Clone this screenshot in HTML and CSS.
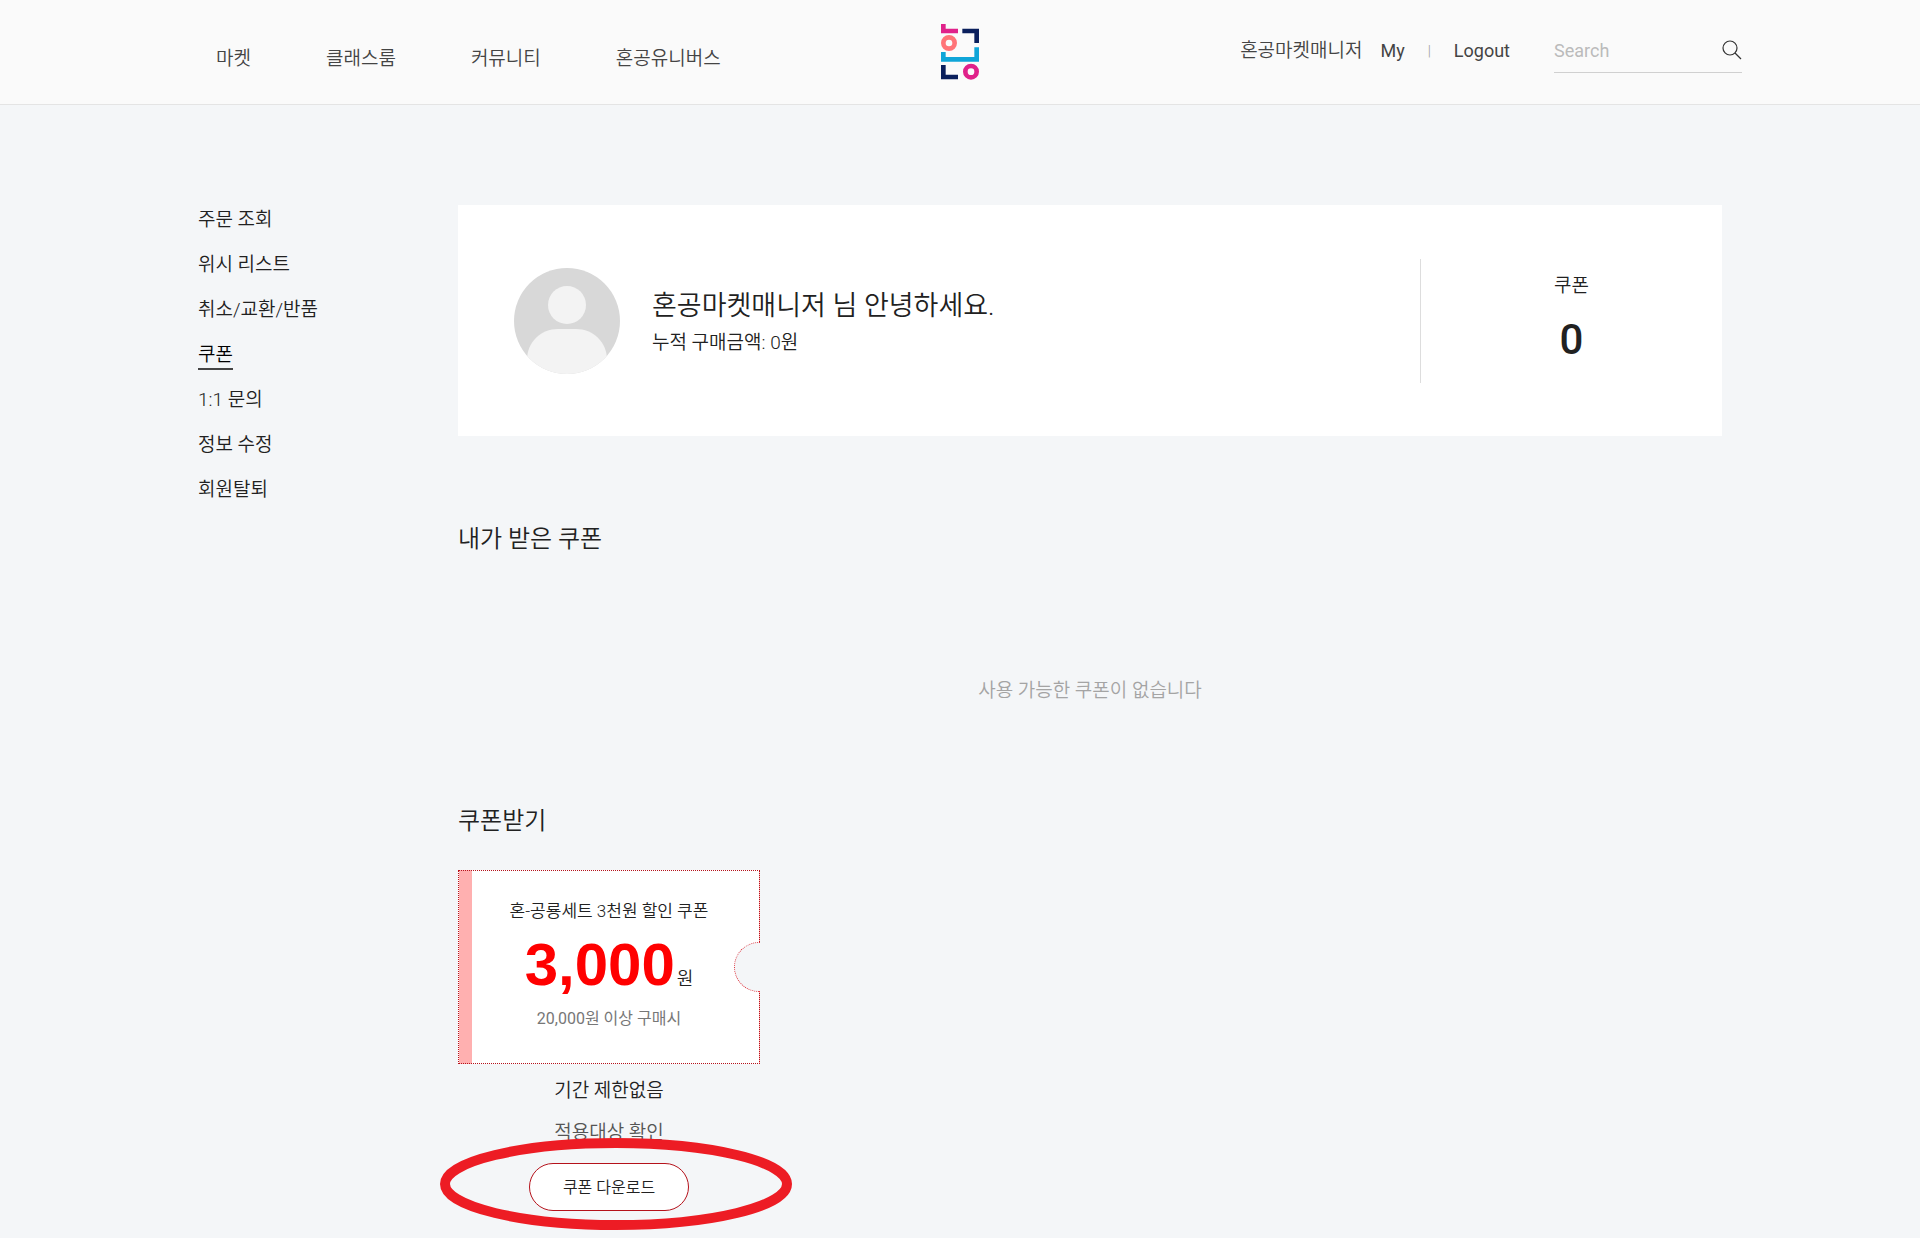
FILE: index.html
```html
<!DOCTYPE html>
<html lang="ko">
<head>
  <meta charset="UTF-8" />
  <meta name="viewport" content="width=device-width, initial-scale=1" />
  <title>쿠폰 - 혼공마켓</title>
  <link rel="stylesheet" href="styles.css">
</head>
<body>
  <header class="header">
    <div class="header-inner">
      <nav class="gnb">
        <a href="#">마켓</a>
        <a href="#">클래스룸</a>
        <a href="#">커뮤니티</a>
        <a href="#">혼공유니버스</a>
      </nav>

      <a class="logo" href="#" aria-label="혼공">
        <svg width="38" height="56" viewBox="0 0 114 168">
          <path fill="#e0218a" d="M0 0h14v14h37v14H0z" />
          <path fill="#0a1f5c" d="M64 14h50v43h-14V28H64z" />
          <circle cx="24" cy="57" r="17" fill="none" stroke="#ff7478" stroke-width="14" />
          <path fill="#0fa5d8" d="M0 84h14v15h86V70h14v43H0z" />
          <path fill="#0a1f5c" d="M0 123h14v29h37v14H0z" />
          <circle cx="90" cy="143" r="17" fill="none" stroke="#e0218a" stroke-width="14" />
        </svg>
      </a>

      <div class="user-menu">
        <span class="user-name">혼공마켓매니저</span>
        <a href="#">My</a>
        <span class="bar">|</span>
        <a href="#">Logout</a>
        <form class="search">
          <input type="text" name="keyword" placeholder="Search" aria-label="Search" />
          <button type="submit" aria-label="검색">
            <svg width="20" height="20" viewBox="0 0 20 20" fill="none" stroke="#333" stroke-width="1.2">
              <circle cx="8" cy="8" r="7" />
              <path d="M13 13l6 6" />
            </svg>
          </button>
        </form>
      </div>
    </div>
  </header>

  <div class="container">
    <ul class="side-menu">
      <li><a href="#">주문 조회</a></li>
      <li><a href="#">위시 리스트</a></li>
      <li><a href="#">취소/교환/반품</a></li>
      <li><a class="active" href="#">쿠폰</a></li>
      <li><a href="#">1:1 문의</a></li>
      <li><a href="#">정보 수정</a></li>
      <li><a href="#">회원탈퇴</a></li>
    </ul>

    <main class="content">
      <section class="profile">
        <svg class="avatar" width="106" height="106" viewBox="0 0 106 106">
          <clipPath id="round"><circle cx="53" cy="53" r="53" /></clipPath>
          <g clip-path="url(#round)">
            <rect width="106" height="106" fill="#d8d8d8" />
            <circle cx="53" cy="37" r="19" fill="#f3f3f3" />
            <path fill="#f3f3f3" d="M13 106V92c0-18 14-31 31-31h18c17 0 31 13 31 31v14z" />
          </g>
        </svg>
        <div class="greeting">
          <h1>혼공마켓매니저 님 안녕하세요.</h1>
          <p>누적 구매금액: 0원</p>
        </div>
        <div class="coupon-count">
          <span>쿠폰</span>
          <strong>0</strong>
        </div>
      </section>

      <h2>내가 받은 쿠폰</h2>
      <p class="empty">사용 가능한 쿠폰이 없습니다</p>

      <h2>쿠폰받기</h2>
      <div class="coupon">
        <div class="ticket">
          <p class="ticket-name">혼-공룡세트 3천원 할인 쿠폰</p>
          <p class="ticket-price"><strong>3,000</strong>원</p>
          <p class="ticket-limit">20,000원 이상 구매시</p>
          <span class="notch"></span>
        </div>
        <p class="period">기간 제한없음</p>
        <a class="target" href="#">적용대상 확인</a>
        <div class="download">
          <button type="button">쿠폰 다운로드</button>
          <svg class="mark" width="352" height="92" viewBox="0 0 352 92">
            <ellipse cx="176" cy="46" rx="171" ry="41" fill="none" stroke="#ed1c24" stroke-width="10" />
          </svg>
        </div>
      </div>
    </main>
  </div>
</body>
</html>
```

FILE: styles.css
```css
* {
  box-sizing: border-box;
}

body {
  margin: 0;
  background-color: #f4f6f8;
  color: #212121;
  font-family: Roboto, 'Noto Sans CJK KR', sans-serif;
  font-size: 19px;
  font-weight: 350;
  line-height: 30px;
}

h1, h2, p, ul {
  margin: 0;
  padding: 0;
  font-weight: 350;
}

a {
  color: inherit;
  text-decoration: none;
}

svg {
  display: block;
}

/* header */
.header {
  background-color: #fafafa;
  border-bottom: 1px solid #e4e4e4;
}

.header-inner {
  display: grid;
  grid-template-columns: 1fr auto 1fr;
  max-width: 1564px;
  height: 104px;
  margin: 0 auto;
  color: #444;
}

.gnb {
  display: flex;
  gap: 75px;
  padding: 44px 0 0 38px;
}

.logo {
  padding-top: 24px;
}

.user-menu {
  display: flex;
  justify-content: flex-end;
  align-items: flex-start;
  gap: 18px;
  padding-top: 36px;
}

.user-menu a {
  font-size: 18px;
  font-weight: 400;
}

.bar {
  margin: 0 5px;
  color: #999;
  font-size: 14px;
}

.search {
  display: flex;
  width: 188px;
  height: 37px;
  margin-left: 26px;
  border-bottom: 1px solid #d0d0d0;
}

.search input {
  flex: 1;
  min-width: 0;
  height: 30px;
  padding: 0;
  border: none;
  background: none;
  font: inherit;
  font-size: 18px;
  font-weight: 400;
}

.search input::placeholder {
  color: #bbb;
}

.search button {
  height: 28px;
  padding: 0;
  border: none;
  background: none;
  cursor: pointer;
}

/* my page */
.container {
  display: flex;
  max-width: 1524px;
  margin: 0 auto;
  padding-top: 100px;
}

.side-menu {
  width: 260px;
  list-style: none;
}

.side-menu li {
  height: 45px;
}

.side-menu a {
  display: inline-block;
}

.side-menu .active {
  height: 30px;
  color: #000;
  border-bottom: 2px solid #444;
}

.content {
  flex: 1;
}

.profile {
  display: flex;
  align-items: center;
  height: 231px;
  padding-left: 56px;
  background-color: #fff;
}

.greeting {
  flex: 1;
  padding-left: 32px;
}

.greeting h1 {
  font-size: 27px;
  line-height: 44px;
}

.coupon-count {
  display: flex;
  flex-direction: column;
  align-items: center;
  gap: 11px;
  width: 302px;
  height: 124px;
  padding-top: 12px;
  border-left: 1px solid #ddd;
}

.coupon-count strong {
  font-size: 42px;
  font-weight: 500;
  line-height: 56px;
}

h2 {
  padding-top: 82px;
  font-size: 24px;
  line-height: 42px;
}

.empty {
  padding: 116px 0 12px;
  color: #a4a4a4;
  text-align: center;
}

.coupon {
  width: 302px;
  margin-top: 28px;
  text-align: center;
}

.ticket {
  position: relative;
  height: 194px;
  padding: 25px 14px 0;
  border: 1px dotted #b5121b;
  background: linear-gradient(to right, #ffb0b0 13px, #fff 13px);
}

.ticket-name {
  font-size: 17px;
}

.ticket-price {
  height: 66px;
  font-size: 18px;
  line-height: 78px;
}

.ticket-price strong {
  margin-right: 2px;
  color: #f00;
  font-family: 'Liberation Sans', sans-serif;
  font-size: 60px;
}

.ticket-limit {
  padding-top: 12px;
  color: #777;
  font-size: 16px;
  font-weight: 400;
}

.notch {
  position: absolute;
  top: 71px;
  right: -1px;
  width: 26px;
  height: 50px;
  border: 1px dotted #e0303a;
  border-right: none;
  border-radius: 25px 0 0 25px;
  background-color: #f4f6f8;
}

.period {
  padding: 12px 0;
}

.target {
  color: #555;
}

.download {
  position: relative;
  padding: 15px 0 27px;
}

.download button {
  width: 160px;
  height: 48px;
  padding: 0 0 2px;
  border: 1px solid #b5121b;
  border-radius: 24px;
  background-color: #fff;
  color: #212121;
  font-family: inherit;
  font-size: 16px;
  font-weight: 350;
  cursor: pointer;
}

/* highlight ring round the download button */
.mark {
  position: absolute;
  top: -10px;
  left: -18px;
  pointer-events: none;
}
```
